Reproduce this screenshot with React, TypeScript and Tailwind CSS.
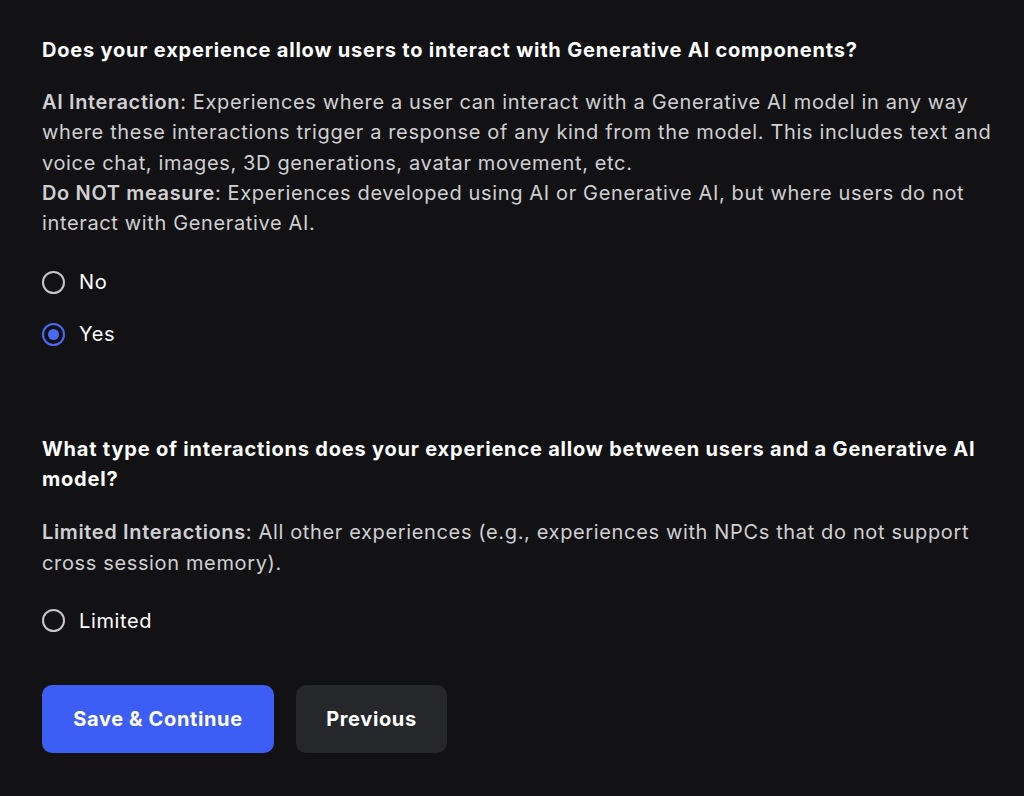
import { useState } from 'react';

type Option = { value: string; label: string };

function RadioGroup({
  name,
  options,
  value,
  onChange,
}: {
  name: string;
  options: Option[];
  value: string | null;
  onChange: (v: string) => void;
}) {
  return (
    <div className="flex flex-col gap-[30px]">
      {options.map((opt) => {
        const checked = value === opt.value;
        return (
          <label key={opt.value} className="flex h-[22px] cursor-pointer items-center gap-[14px]">
            <input
              type="radio"
              name={name}
              className="sr-only"
              checked={checked}
              onChange={() => onChange(opt.value)}
            />
            <span
              className={
                checked
                  ? 'flex h-[23px] w-[23px] items-center justify-center rounded-full border-2 border-[#4a6bf7]'
                  : 'flex h-[23px] w-[23px] items-center justify-center rounded-full border-2 border-[#c8c8ca]'
              }
            >
              {checked && <span className="h-[11px] w-[11px] rounded-full bg-[#4a6bf7]" />}
            </span>
            <span className="text-[20px] tracking-[0.032em] text-white">{opt.label}</span>
          </label>
        );
      })}
    </div>
  );
}

export default function App() {
  const [aiUse, setAiUse] = useState<string | null>('yes');
  const [interaction, setInteraction] = useState<string | null>(null);

  return (
    <div
      className="min-h-screen bg-[#121215] pl-[42px] pr-[30px] pt-[35px] pb-[40px]"
      style={{ fontFamily: 'Inter, "Noto Sans", sans-serif' }}
    >
      {/* Question 1 */}
      <section>
        <h2 className="text-[20px] font-bold leading-[30px] tracking-[0.04em] text-white">
          Does your experience allow users to interact with Generative AI components?
        </h2>
        <p className="mt-[22px] text-[20px] leading-[30.25px] tracking-[0.032em] text-[#d0d0d2]">
          <span className="font-semibold">AI Interaction</span>: Experiences where a user can interact with a
          Generative AI model in any way where these interactions trigger a response of any kind from the
          model. This includes text and voice chat, images, 3D generations, avatar movement, etc.
          <br />
          <span className="font-semibold">Do NOT measure</span>: Experiences developed using AI or Generative AI,
          but where users do not interact with Generative AI.
        </p>
        <div className="mt-[33px]">
          <RadioGroup
            name="ai-use"
            value={aiUse}
            onChange={setAiUse}
            options={[
              { value: 'no', label: 'No' },
              { value: 'yes', label: 'Yes' },
            ]}
          />
        </div>
      </section>

      {/* Question 2 */}
      <section className="mt-[89px]">
        <h2 className="text-[20px] font-bold leading-[30px] tracking-[0.04em] text-white">
          What type of interactions does your experience allow between users and a Generative AI model?
        </h2>
        <p className="mt-[23px] text-[20px] leading-[30.25px] tracking-[0.032em] text-[#d0d0d2]">
          <span className="font-semibold">Limited Interactions</span>: All other experiences (e.g., experiences
          with NPCs that do not support cross session memory).
        </p>
        <div className="mt-[32px]">
          <RadioGroup
            name="interaction"
            value={interaction}
            onChange={setInteraction}
            options={[{ value: 'limited', label: 'Limited' }]}
          />
        </div>
      </section>

      <div className="mt-[53px] flex gap-[22px]">
        <button className="h-[68px] w-[232px] rounded-[10px] bg-[#3d5ef5] text-[20px] font-bold tracking-[0.032em] text-white">
          Save &amp; Continue
        </button>
        <button className="h-[68px] w-[151px] rounded-[10px] bg-[#26272b] text-[20px] font-bold tracking-[0.032em] text-white">
          Previous
        </button>
      </div>
    </div>
  );
}
